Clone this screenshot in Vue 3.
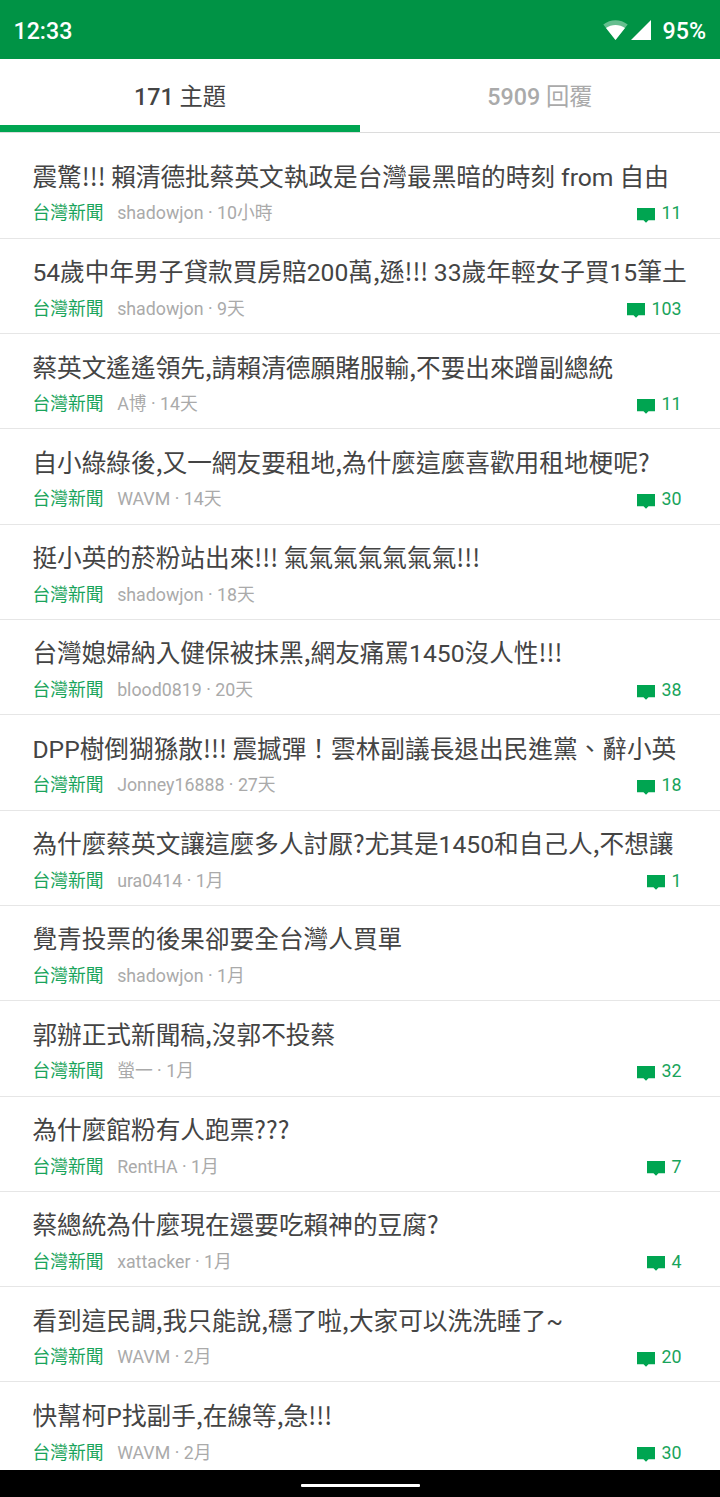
<template>
  <div class="screen">
    <header class="status-bar">
      <span class="clock">12:33</span>
      <div class="status-right">
        <svg class="wifi" width="25" height="20" viewBox="0 0 25 20" aria-hidden="true">
          <path d="M.3 4.6C7.5-1.2 17.5-1.2 24.7 4.6L12.5 20Z" fill="#fff" fill-opacity=".4" />
          <path d="M3 8C8.5 4 16.5 4 22 8L12.5 20Z" fill="#fff" />
        </svg>
        <svg class="signal" width="20" height="20" viewBox="0 0 20 20" aria-hidden="true">
          <path d="M20 0V20H0Z" fill="#fff" />
        </svg>
        <span class="battery">95%</span>
      </div>
    </header>

    <nav class="tabs">
      <button
        v-for="tab in tabs"
        :key="tab.id"
        type="button"
        class="tab"
        :class="{ active: tab.id === current }"
        @click="current = tab.id">
        <span>{{ tab.count }} <span class="tab-name">{{ tab.name }}</span></span>
      </button>
    </nav>

    <main class="topics">
      <article v-for="topic in topics" :key="topic.title" class="topic">
        <h2><span v-for="(part, i) in splitTitle(topic.title)" :key="i" :class="{ punct: i % 2 }">{{ part }}</span></h2>
        <div class="meta">
          <span class="board">台灣新聞</span>
          <span class="author">{{ topic.author }} · {{ topic.time }}</span>
          <span v-if="topic.replies" class="replies">
            <svg width="18" height="15" viewBox="0 0 18 15" aria-hidden="true">
              <path d="M0 0H18V12.3H11.5L9 14.7L6.5 12.3H0Z" fill="#00a551" />
            </svg>
            {{ topic.replies }}
          </span>
        </div>
      </article>
    </main>

    <footer class="nav-bar"><span class="handle"></span></footer>
  </div>
</template>

<script setup>
import { ref } from 'vue'

const current = ref('topics')

const tabs = [
  { id: 'topics', count: 171, name: '主題' },
  { id: 'replies', count: 5909, name: '回覆' },
]

const topics = [
  { title: '震驚!!! 賴清德批蔡英文執政是台灣最黑暗的時刻 from 自由', author: 'shadowjon', time: '10小時', replies: 11 },
  { title: '54歲中年男子貸款買房賠200萬,遜!!! 33歲年輕女子買15筆土', author: 'shadowjon', time: '9天', replies: 103 },
  { title: '蔡英文遙遙領先,請賴清德願賭服輸,不要出來蹭副總統', author: 'A博', time: '14天', replies: 11 },
  { title: '自小綠綠後,又一網友要租地,為什麼這麼喜歡用租地梗呢?', author: 'WAVM', time: '14天', replies: 30 },
  { title: '挺小英的菸粉站出來!!! 氣氣氣氣氣氣氣!!!', author: 'shadowjon', time: '18天', replies: 0 },
  { title: '台灣媳婦納入健保被抹黑,網友痛罵1450沒人性!!!', author: 'blood0819', time: '20天', replies: 38 },
  { title: 'DPP樹倒猢猻散!!! 震撼彈！雲林副議長退出民進黨、辭小英', author: 'Jonney16888', time: '27天', replies: 18 },
  { title: '為什麼蔡英文讓這麼多人討厭?尤其是1450和自己人,不想讓', author: 'ura0414', time: '1月', replies: 1 },
  { title: '覺青投票的後果卻要全台灣人買單', author: 'shadowjon', time: '1月', replies: 0 },
  { title: '郭辦正式新聞稿,沒郭不投蔡', author: '螢一', time: '1月', replies: 32 },
  { title: '為什麼館粉有人跑票???', author: 'RentHA', time: '1月', replies: 7 },
  { title: '蔡總統為什麼現在還要吃賴神的豆腐?', author: 'xattacker', time: '1月', replies: 4 },
  { title: '看到這民調,我只能說,穩了啦,大家可以洗洗睡了~', author: 'WAVM', time: '2月', replies: 20 },
  { title: '快幫柯P找副手,在線等,急!!!', author: 'WAVM', time: '2月', replies: 30 },
]

// odd parts are punctuation, set in the CJK face like the text around them
const splitTitle = (title) => title.split(/([!,?]+ ?)/)
</script>

<style>
body { background: #fff; }
</style>

<style scoped>
.screen { box-sizing: border-box; width: 720px; height: 1497px; display: flex; flex-direction: column; overflow: hidden; color: #444; background: #fff; font-family: Roboto, "Noto Sans CJK TC", sans-serif; }
.status-bar { box-sizing: border-box; flex: none; height: 59px; padding: 2px 14px 0 13.5px; display: flex; align-items: center; justify-content: space-between; color: #fff; background: #009345; font-size: 23.2px; font-weight: 500; }
.status-right { display: flex; align-items: center; }
.wifi { margin: -2px 3px 0 0; }
.signal { margin: -2px 12px 0 0; }
.tabs { box-sizing: border-box; flex: none; height: 74px; display: flex; border-bottom: 1px solid #dcdcdc; }
.tab { box-sizing: border-box; flex: 1; height: 73px; padding: 12px 0 0; border: 0; border-bottom: 7px solid transparent; color: #aaa; background: none; font: 500 23.3px/1 Roboto, "Noto Sans CJK TC", sans-serif; }
.tab-name { font-weight: 400; }
.tab.active { color: #444; border-bottom-color: #00a551; }
.topics { flex: 1; min-height: 0; padding-top: 10.4px; overflow: hidden; }
.topic { box-sizing: border-box; height: 95.32px; padding: 16.5px 38.6px 0 32.4px; border-bottom: 1px solid #e6e6e6; }
.topic h2 { margin: 0; height: 35.6px; color: #444; font-size: 24.67px; font-weight: 400; line-height: 36px; white-space: nowrap; }
.punct { font-family: "Noto Sans CJK TC", sans-serif; line-height: 0; white-space: pre; }
.meta { display: flex; align-items: center; height: 36px; font-size: 17.8px; line-height: 36px; white-space: nowrap; }
.board { margin-right: 13.6px; color: #19a45b; }
.author { color: #aaa; }
.replies { margin-left: auto; display: flex; align-items: center; gap: 6px; color: #19a45b; }
.replies svg { margin-top: 4px; }
.nav-bar { flex: none; height: 27px; display: flex; align-items: center; justify-content: center; background: #000; }
.handle { width: 119px; height: 3px; margin-top: 4px; border-radius: 1px; background: #fff; }
</style>
